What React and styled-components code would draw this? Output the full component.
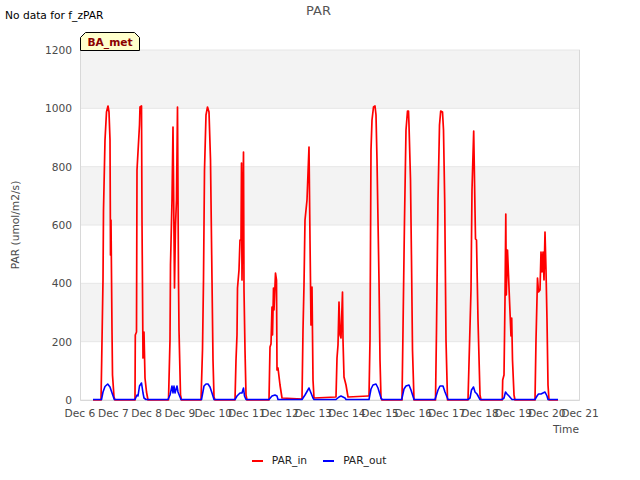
import React from "react";
import styled, { createGlobalStyle } from "styled-components";

const GlobalStyle = createGlobalStyle`
  html, body {
    margin: 0;
    padding: 0;
    background: #fff;
  }
`;

const Page = styled.div`
  width: 640px;
  height: 480px;
  display: flex;
  flex-direction: column;
  overflow: hidden;
  font-family: "DejaVu Sans", sans-serif;
`;

const Header = styled.div`
  display: grid;
  grid-template-columns: 1fr auto 1fr;
  height: 24px;
  padding: 3px 8px 0 5px;
  box-sizing: border-box;
`;

const Status = styled.div`
  font-size: 10.67px;
  line-height: 13px;
  margin-top: 6px;
  color: #000;
`;

const Title = styled.div`
  font-size: 13px;
  line-height: 15px;
  color: #555;
`;

const Chart = styled.svg`
  display: block;
  flex: none;
  font-family: "DejaVu Sans", sans-serif;
`;

const Legend = styled.div`
  display: flex;
  justify-content: center;
  gap: 16px;
  padding: 9px 2px 0 0;
`;

const LegendItem = styled.div`
  display: flex;
  align-items: center;
  gap: 9px;
  font-size: 10.67px;
  line-height: 14px;
  color: #222;
`;

const Swatch = styled.span`
  width: 11px;
  height: 2px;
  background: ${(p) => p.$color};
`;

const yTicks = [0, 200, 400, 600, 800, 1000, 1200];
const days = [6, 7, 8, 9, 10, 11, 12, 13, 14, 15, 16, 17, 18, 19, 20, 21];
const yOf = (v) => 400 - (v * 350) / 1200;
const xOf = (d) => 80 + (d - 6) * (500 / 15);

const parIn = [
  [93, 400], [101, 400], [101.7, 360], [103, 280], [103.5, 210], [105, 140], [106.5, 112], [108, 106], [109, 112], [110, 140], [110.5, 255], [111, 220], [112, 330], [112.5, 375], [114, 397], [115, 400],
  [135, 400], [135.3, 335], [136.5, 332], [137, 170], [139.5, 125], [140, 107], [141.5, 106], [142, 220], [143, 358], [144, 332], [145, 378], [146.5, 392], [148, 400],
  [168.5, 400], [170, 340], [170.5, 265], [172, 200], [173, 127], [174.5, 288], [175.5, 225], [176.5, 200], [177.5, 107], [178.5, 280], [179, 330], [180.5, 395], [181.5, 400],
  [201, 400], [202.5, 350], [203.5, 280], [204.5, 170], [206, 115], [207.5, 107], [209, 112], [210.5, 160], [212, 280], [213, 360], [214, 397], [215, 400],
  [235, 400], [236, 360], [237, 335], [237.5, 288], [239, 270], [240, 240], [241, 240], [241.5, 163], [242, 280], [243.5, 152], [244, 290], [245, 350], [246, 395], [247, 400],
  [269, 400], [270, 347], [271, 344], [272, 307], [272.5, 335], [273.5, 288], [274, 310], [275.5, 273], [276.5, 280], [277, 370], [278, 368], [280, 385], [282, 398], [302, 399],
  [303, 330], [304, 285], [305, 220], [307, 200], [309, 147], [310, 240], [311, 325], [312, 287], [313, 380], [314, 398], [336, 397],
  [337, 358], [338, 345], [339, 302], [340, 335], [341, 338], [342.5, 292], [343, 340], [344, 377], [346, 385], [348, 397], [368, 396],
  [369, 396], [370, 340], [371, 150], [372, 120], [373.5, 107], [375, 106], [376, 115], [377, 160], [379, 280], [380, 360], [381, 398], [382, 400],
  [402, 400], [403, 330], [404.5, 220], [406, 130], [407.5, 111], [408.5, 111], [409, 125], [410.5, 180], [411.5, 260], [412.5, 350], [414, 400],
  [435.5, 400], [436.5, 330], [438, 200], [439.5, 125], [440.7, 111], [442.5, 112], [443.5, 130], [444.7, 200], [446, 340], [447.5, 400],
  [468, 400], [471, 290], [472, 190], [473.7, 131], [475, 210], [475.5, 239], [476.5, 240], [478, 320], [480, 395], [481, 400],
  [502.3, 400], [502.7, 380], [504, 375], [505, 300], [505.8, 214], [506.3, 295], [507.5, 250], [508.5, 275], [509.5, 300], [511, 336], [511.7, 318], [512.5, 360], [514, 395], [515, 400],
  [535, 400], [536, 340], [537.5, 278], [538.5, 292], [540, 290], [541, 252], [542, 272], [543, 252], [544, 280], [545, 232], [546, 270], [547, 320], [548, 385], [549, 400], [558, 400],
];

const parOut = [
  [93, 399.5], [101.5, 399.5], [103, 392], [105, 386.5], [107.7, 384], [110, 387], [111.7, 392], [114.3, 399.5],
  [135, 399.5], [137, 395], [138, 396], [139.5, 386], [141.5, 383], [143, 393], [144, 398], [146, 399.5],
  [168, 399.5], [170, 395], [172, 386], [173, 393], [174, 386], [175, 393], [177, 386], [178, 392], [181, 399.5],
  [201.5, 399.5], [204, 386], [206, 384], [208, 384], [210, 387], [212, 393], [214, 399.5],
  [235, 399.5], [237, 396], [240, 393], [242, 393], [243.5, 388], [244.5, 396], [246, 399.5],
  [269, 399.5], [272, 396], [275, 395], [277, 396], [278, 399.5],
  [302, 399.5], [305, 395], [309, 388], [311, 393], [313, 398], [314, 399.5],
  [336, 399.5], [339, 397], [341, 396], [345, 398], [346, 399.5],
  [369, 399.5], [371, 389], [373, 385], [376, 384], [378, 388], [381, 398], [382, 399.5],
  [401.7, 399.5], [404, 389], [406, 386], [409, 385], [411, 390], [414, 399.5],
  [435, 399.5], [438, 390], [440, 386], [443, 386], [445, 392], [448, 399.5],
  [468, 399.5], [470, 398], [471.5, 390], [473.5, 387], [475, 392], [477, 394], [480, 399.5],
  [502, 399.5], [504, 398], [505.5, 392], [507, 394], [509, 396], [512, 399.5],
  [535, 399.5], [537, 396], [538.5, 394], [541, 394], [545, 392], [547, 396], [548, 399.5], [558, 399.5],
];

const toPoints = (pts) => pts.map((p) => p.join(",")).join(" ");

function ParChart() {
  return (
    <Chart width="640" height="421" viewBox="0 24 640 421">
      {[0, 2, 4].map((i) => (
        <rect key={i} x="80" y={yOf(1200 - i * 200)} width="500" height={350 / 6} fill="#f3f3f3" />
      ))}
      {yTicks.map((v) => (
        <line key={v} x1="80" x2="580" y1={yOf(v)} y2={yOf(v)} stroke="#e6e6e6" strokeWidth="1" />
      ))}
      <path d="M80.5 50V400.5H579.5V50" fill="none" stroke="#d8d8d8" strokeWidth="1" />

      {yTicks.map((v) => (
        <text key={v} x="72" y={yOf(v) + 4} fontSize="10.67" fill="#4a4a4a" textAnchor="end">
          {v}
        </text>
      ))}
      {days.map((d) => (
        <text key={d} x={xOf(d)} y="417" fontSize="10.67" fill="#4a4a4a" textAnchor="middle">
          Dec {d}
        </text>
      ))}
      <text x="579" y="433" fontSize="10.67" fill="#4a4a4a" textAnchor="end">Time</text>
      <text x="19" y="225" fontSize="10.67" fill="#4a4a4a" textAnchor="middle" transform="rotate(-90 19 225)">
        PAR (umol/m2/s)
      </text>

      <polyline points={toPoints(parIn)} fill="none" stroke="#ff0000" strokeWidth="1.7" strokeLinejoin="round" />
      <polyline points={toPoints(parOut)} fill="none" stroke="#0000ff" strokeWidth="1.6" strokeLinejoin="round" />

      <polygon points="85.5,32.5 134.5,32.5 139.5,37.5 139.5,50.5 80.5,50.5 80.5,37.5" fill="#ffffcc" stroke="#000" strokeWidth="1" />
      <text x="110" y="46" fontSize="10.67" fontWeight="bold" fill="#8b0000" textAnchor="middle">BA_met</text>
    </Chart>
  );
}

export default function App() {
  return (
    <Page>
      <GlobalStyle />
      <Header>
        <Status>No data for f_zPAR</Status>
        <Title>PAR</Title>
      </Header>
      <ParChart />
      <Legend>
        <LegendItem>
          <Swatch $color="#ff0000" />
          PAR_in
        </LegendItem>
        <LegendItem>
          <Swatch $color="#0000ff" />
          PAR_out
        </LegendItem>
      </Legend>
    </Page>
  );
}
